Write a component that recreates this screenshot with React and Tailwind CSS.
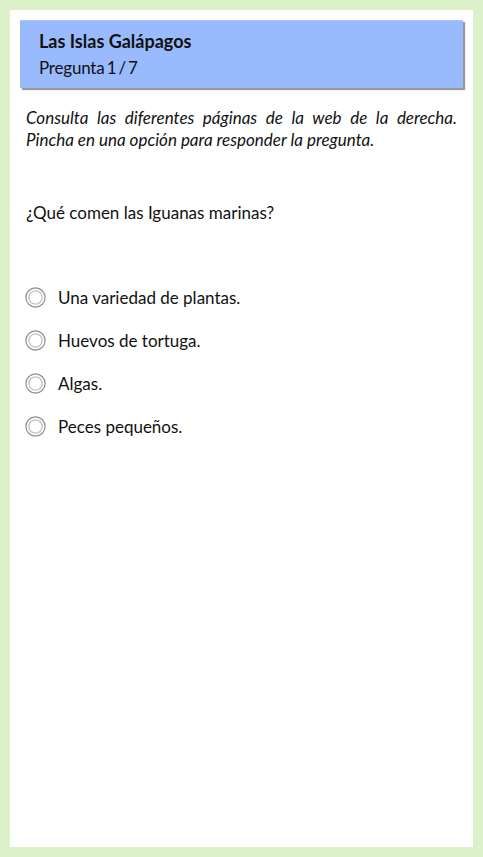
import React from "react";

function Radio() {
  return (
    <svg width="21" height="21" viewBox="0 0 21 21" className="shrink-0">
      <circle cx="10.5" cy="10.5" r="9.6" fill="#ffffff" stroke="#8f8f8f" strokeWidth="1.2" />
      <circle cx="10.5" cy="10.5" r="6.6" fill="#ffffff" stroke="#c4c4c4" strokeWidth="1.4" />
    </svg>
  );
}

const options = [
  "Una variedad de plantas.",
  "Huevos de tortuga.",
  "Algas.",
  "Peces pequeños.",
];

export default function App() {
  return (
    <div className="min-h-[857px] w-full bg-[#dcf1ca] p-[10px]" style={{ fontFamily: "Lato, 'Open Sans', sans-serif" }}>
      <div className="h-[837px] bg-white pt-[10px]">
        <div className="mx-[10px] h-[68px] border-t border-[#a8c6ff] bg-[#99bbfd] pl-[19px] pt-[7px] shadow-[2px_2px_1px_#9a9a9a]">
          <div className="text-[18px] font-bold leading-[27px] text-[#111]">Las Islas Galápagos</div>
          <div className="text-[17px] leading-[26px] tracking-[-0.2px] [word-spacing:-2px] text-[#111]">Pregunta 1 / 7</div>
        </div>
        <div className="px-[16px]">
          <div className="mt-[19px] text-[17px] italic leading-[22px] text-[#111]">
            <div className="text-justify [text-align-last:justify]">Consulta las diferentes páginas de la web de la derecha.</div>
            <div>Pincha en una opción para responder la pregunta.</div>
          </div>
          <p className="mt-[51px] text-[17px] leading-[22px] text-[#111]">¿Qué comen las Iguanas marinas?</p>
        </div>
        <div className="mt-[52px] flex flex-col pl-[15px]">
          {options.map((o) => (
            <div key={o} className="flex h-[43px] items-center gap-[12px]">
              <Radio />
              <span className="text-[17px] leading-[22px] text-[#111]">{o}</span>
            </div>
          ))}
        </div>
      </div>
    </div>
  );
}
